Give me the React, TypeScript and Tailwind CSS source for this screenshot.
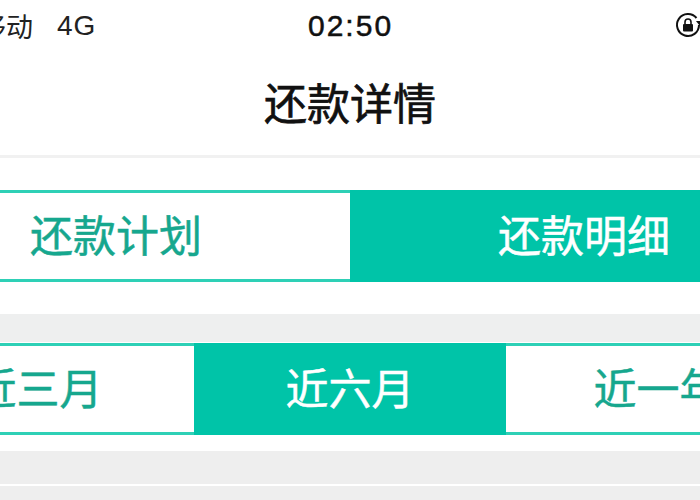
const cjk = "font-['Noto_Sans_CJK_SC','Noto_Sans',sans-serif]";

function StatusIcon() {
  return (
    <svg width="30" height="30" viewBox="0 0 30 30" className="shrink-0 text-[#111]">
      <path d="M23.5 8A11 11 0 1 0 26 15" fill="none" stroke="currentColor" strokeWidth="2" />
      <path d="M23 11h7l-3.5 4.5z" fill="currentColor" />
      <rect x="10" y="14" width="10" height="7.5" rx="1" fill="currentColor" />
      <path d="M12 14v-2a3 3 0 0 1 6 0v2" fill="none" stroke="currentColor" strokeWidth="1.6" />
    </svg>
  );
}

function Tab({ label, active, widthClass }: { label: string; active?: boolean; widthClass: string }) {
  return (
    <div
      className={`flex h-[92px] items-center justify-center pb-[5px] [-webkit-text-stroke:0.5px] ${widthClass} ${
        active
          ? 'bg-[#00c4a8] text-white'
          : 'border-y-[3px] border-[#2ed0b6] bg-white text-[#16a78e]'
      }`}
    >
      {label}
    </div>
  );
}

export default function App() {
  return (
    <div className={`h-[500px] w-[700px] overflow-hidden bg-white ${cjk}`}>
      <div className="ml-[-118px] w-[936px]">
        <div className="relative flex h-[50px] items-center justify-between pl-[43px] pr-[115px] text-[#222]">
          <div className="flex items-center gap-[24px] text-[27px] leading-none">
            <span className="whitespace-nowrap">中国移动</span>
            <span className="pt-px font-['Liberation_Sans',sans-serif] text-[28px] tracking-[1px]">4G</span>
          </div>
          <span className="absolute left-[426px] font-['Liberation_Sans',sans-serif] text-[30px] tracking-[2px] text-[#111] [-webkit-text-stroke:0.5px]">
            02:50
          </span>
          <StatusIcon />
        </div>

        <div className="flex h-[105px] items-center justify-center pb-[3px] text-[43px] leading-none text-[#111] [-webkit-text-stroke:0.7px]">
          还款详情
        </div>
        <div className="h-[3px] bg-[#f1f1f1]" />

        <div className="flex pt-[32px] text-[43px] leading-none">
          <Tab label="还款计划" widthClass="w-[468px]" />
          <Tab label="还款明细" active widthClass="w-[468px]" />
        </div>

        <div className="mt-[32px] h-[28px] bg-[#eeefef]" />

        <div className="flex pt-px text-[43px] leading-none">
          <Tab label="近三月" widthClass="w-[312px]" />
          <Tab label="近六月" active widthClass="w-[312px]" />
          <Tab label="近一年" widthClass="w-[312px] pr-[8px]" />
        </div>

        <div className="mt-[16px] h-[33px] bg-[#eeeeee]" />
        <div className="mt-[2px] h-[20px] bg-[#eeeeee]" />
      </div>
    </div>
  );
}
